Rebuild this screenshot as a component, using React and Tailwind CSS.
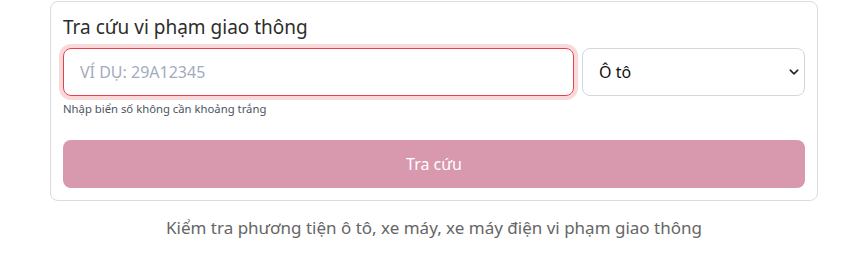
export default function App() {
  return (
    <div
      className="min-h-screen bg-white pt-px pl-[50px] pr-[45px] text-[#212529]"
      style={{ fontFamily: '"Noto Sans", "Open Sans", sans-serif' }}
    >
      {/* Card */}
      <div className="rounded-[8px] border border-[#dcdcdc] px-3 pt-[13px] pb-3">
        <h1 className="mb-[9px] text-[19px] leading-[24px] text-[#2d2d2d]">
          Tra cứu vi phạm giao thông
        </h1>

        <div className="flex gap-2">
          <div className="w-[511px]">
            <input
              type="text"
              placeholder="VÍ DỤ: 29A12345"
              className="h-[48px] w-full rounded-[8px] border border-[#e3424d] px-4 text-[16px] text-[#212529] shadow-[0_0_0_4px_rgba(232,80,90,0.22)] outline-none placeholder:text-[#a3abbd]"
            />
            <p className="mt-[4px] text-[11.3px] leading-[18px] text-[#4b5563]">
              Nhập biển số không cần khoảng trắng
            </p>
          </div>

          <div className="relative flex-1">
            <select className="h-[48px] w-full appearance-none rounded-[8px] border border-[#d3d6de] bg-white pl-4 text-[16px] text-[#111] outline-none">
              <option>Ô tô</option>
              <option>Xe máy</option>
              <option>Xe máy điện</option>
            </select>
            <svg
              className="pointer-events-none absolute right-[6px] top-[19px]"
              width="10"
              height="10"
              viewBox="0 0 16 16"
            >
              <path
                d="M2 5l6 6 6-6"
                fill="none"
                stroke="#222"
                strokeWidth="2.4"
                strokeLinecap="round"
                strokeLinejoin="round"
              />
            </svg>
          </div>
        </div>

        <button className="mt-[22px] h-[48px] w-full rounded-[8px] bg-[#d898ad] text-[16px] text-white">
          Tra cứu
        </button>
      </div>

      <p className="mt-[15px] text-center text-[17px] leading-[24px] text-[#666]">
        Kiểm tra phương tiện ô tô, xe máy, xe máy điện vi phạm giao thông
      </p>
    </div>
  );
}
